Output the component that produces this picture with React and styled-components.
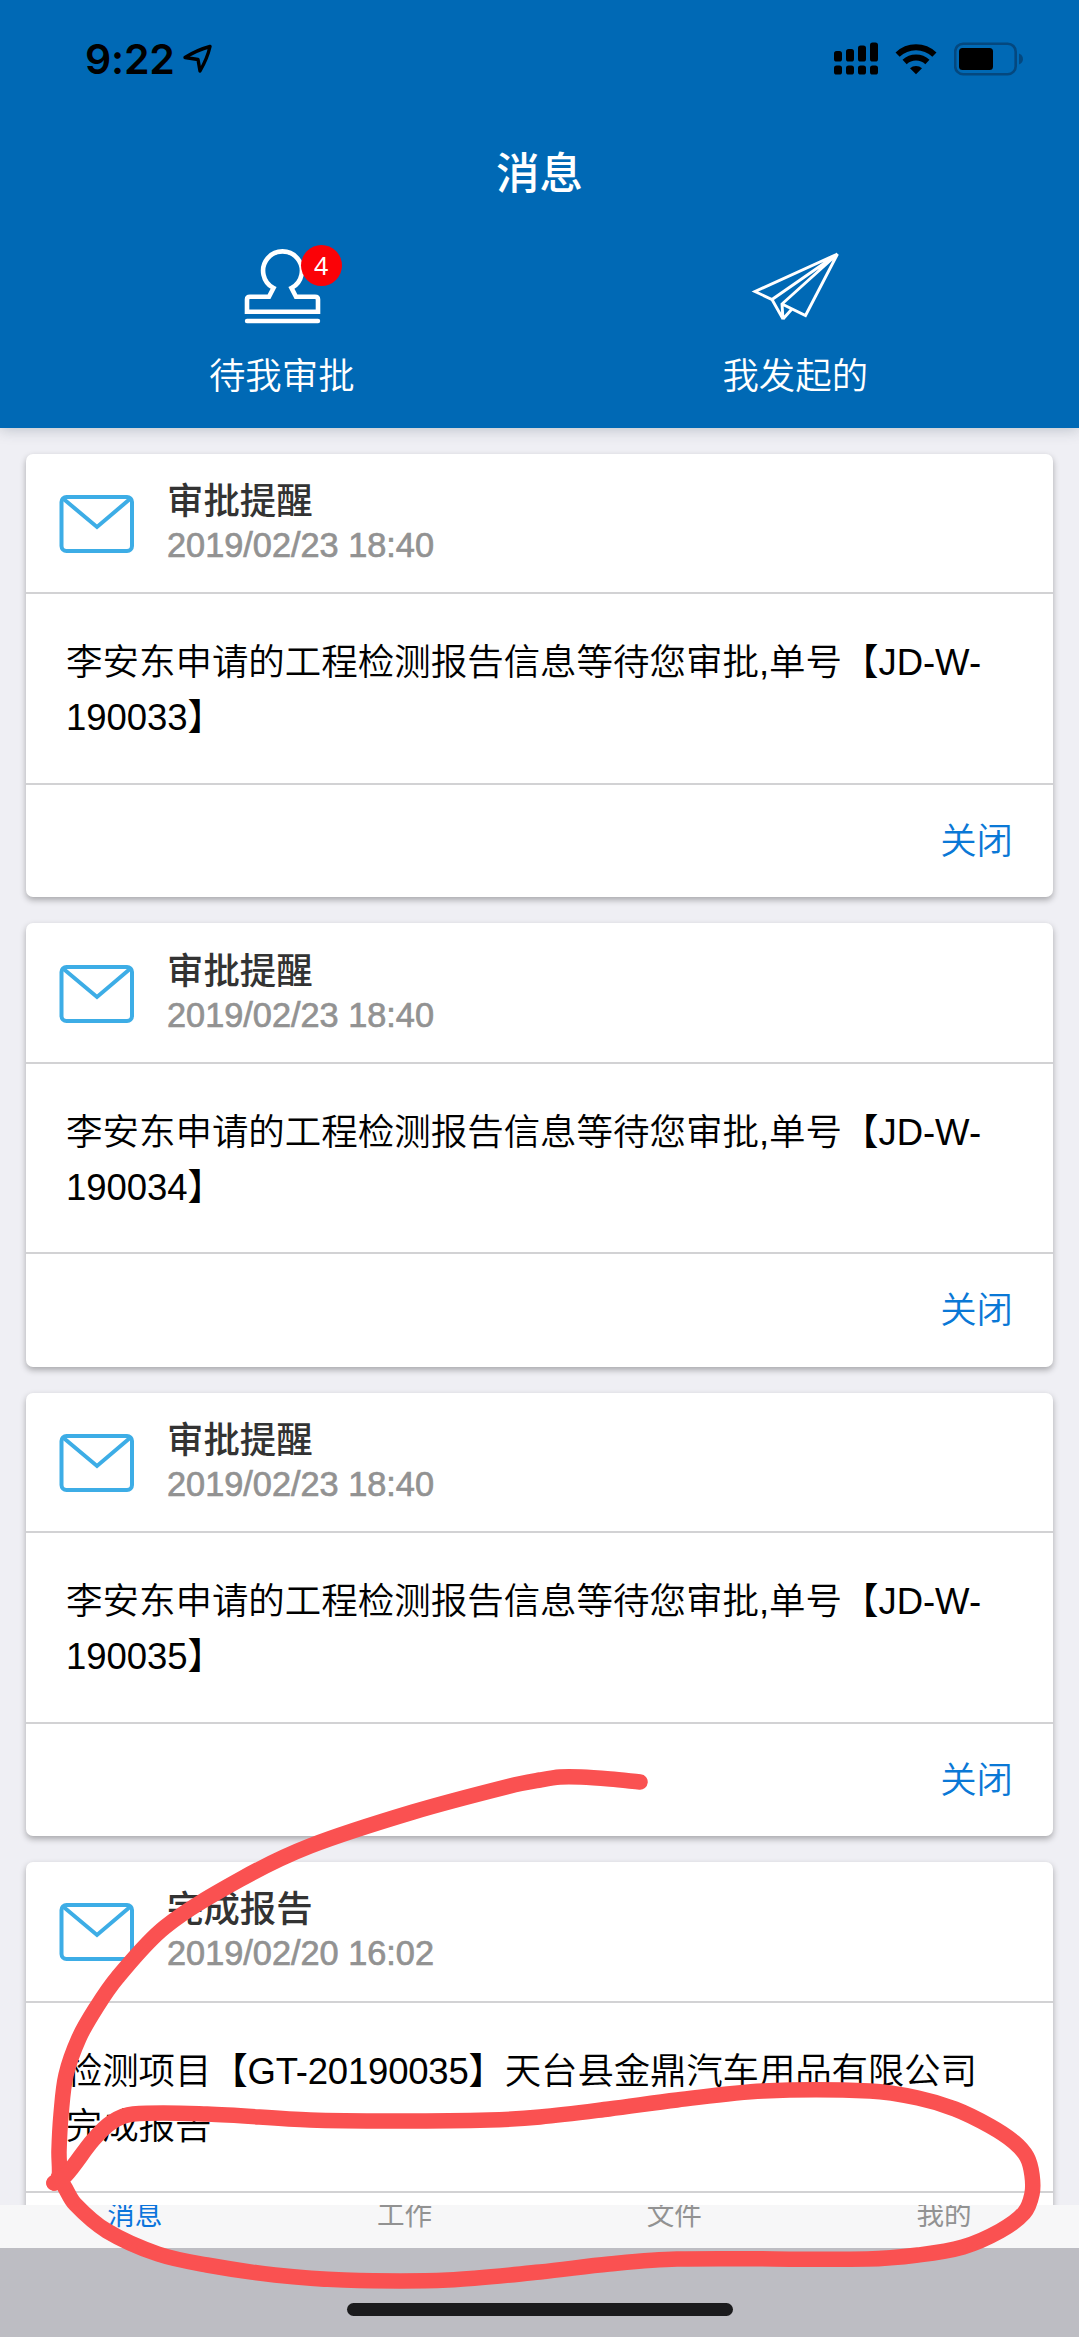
import React from "react";
import styled, { createGlobalStyle } from "styled-components";

const Global = createGlobalStyle`
  * { box-sizing: border-box; }
  body { margin: 0; background: #efeff4; }
`;

const sans = `"Liberation Sans", "Noto Sans CJK SC", sans-serif`;
const cjk = `"Noto Sans CJK SC", sans-serif`;

const Screen = styled.div`
  position: relative;
  display: flex;
  flex-direction: column;
  width: 1079px;
  height: 2337px;
  overflow: hidden;
  background: #efeff4;
  font-family: ${sans};
`;

const Header = styled.header`
  flex: none;
  display: flex;
  flex-direction: column;
  height: 428px;
  background: #0069b5;
  color: #fff;
  box-shadow: 0 1px 14px rgba(40, 60, 80, 0.28);
`;

const StatusBar = styled.div`
  display: flex;
  justify-content: space-between;
  align-items: center;
  height: 118px;
  padding: 0 56px 0 85px;
  color: #000;
`;

const StatusGroup = styled.div`
  display: flex;
  align-items: center;
  gap: ${(p) => p.$gap}px;
`;

const Clock = styled.span`
  font: 600 41px/48px Inter, sans-serif;
  letter-spacing: -0.2px;
`;

const Title = styled.h1`
  margin: 0;
  height: 108px;
  font: 500 43.5px/105px ${cjk};
  text-align: center;
`;

const Actions = styled.nav`
  display: grid;
  grid-template-columns: 1fr 1fr;
  padding: 18px 27px 0 25px;
`;

const Action = styled.a`
  display: flex;
  flex-direction: column;
  align-items: center;
  gap: 18px;
  font: 350 36.4px/54px ${cjk};
  color: #fff;
`;

const ActionIcon = styled.span`
  position: relative;
  display: flex;
  width: 88px;
  height: 84px;
`;

const Badge = styled.span`
  position: absolute;
  top: 1px;
  left: 63px;
  width: 41px;
  height: 41px;
  border-radius: 50%;
  background: #fb0207;
  font: 400 25px/41px "Noto Sans", sans-serif;
  text-align: center;
`;

const Feed = styled.main`
  flex: 1;
  min-height: 0;
  overflow: hidden;
  display: flex;
  flex-direction: column;
  gap: 26px;
  padding: 26px 26px 0;
`;

const Card = styled.article`
  flex: none;
  height: 443.4px;
  display: flex;
  flex-direction: column;
  border-radius: 7px;
  background: #fff;
  box-shadow: 0 3px 6px rgba(0, 0, 0, 0.3);
`;

const CardHead = styled.div`
  display: flex;
  gap: 32px;
  height: 140.4px;
  padding: 0 33px;
  align-items: center;
  border-bottom: 2px solid #d2d2d4;
`;

const Heading = styled.div`
  display: flex;
  flex-direction: column;
`;

const CardTitle = styled.h2`
  margin: 0;
  font: 500 36.4px/44px ${cjk};
  color: #333;
`;

const CardDate = styled.time`
  font: 400 34.3px/50px ${sans};
  color: #929292;
  -webkit-text-stroke: 0.7px #929292;
`;

const CardBody = styled.p`
  margin: 0;
  height: 190.4px;
  padding: 41px 40px 37px;
  font: 350 36.5px/55px ${sans};
  letter-spacing: ${(p) => (p.$tight ? "-0.2px" : "-0.03px")};
  color: #000;
  border-bottom: 2px solid #d2d2d4;
`;

const CardFoot = styled.div`
  flex: 1;
  display: flex;
  align-items: center;
  justify-content: flex-end;
  padding: 0 40px 6px;
`;

const CloseLink = styled.a`
  font: 350 36.4px/54px ${cjk};
  color: #0a78d6;
`;

const TabBar = styled.nav`
  flex: none;
  display: grid;
  grid-template-columns: repeat(4, 1fr);
  height: 43px;
  overflow: hidden;
  background: #f7f7f8;
`;

const Tab = styled.a`
  margin-top: -12px;
  height: 40px;
  font: 400 27.6px/40px ${cjk};
  text-align: center;
  color: ${(p) => (p.$active ? "#0a74dc" : "#929292")};
`;

const HomeArea = styled.footer`
  flex: none;
  display: flex;
  justify-content: center;
  height: 89px;
  padding-top: 55px;
  background: #bdbdc3;
`;

const HomeIndicator = styled.span`
  width: 386px;
  height: 13px;
  border-radius: 7px;
  background: #1b1b1d;
`;

const Ink = styled.svg`
  position: absolute;
  inset: 0;
  pointer-events: none;
`;

const messages = [
  { title: "审批提醒", date: "2019/02/23 18:40", text: "李安东申请的工程检测报告信息等待您审批,单号【JD-W-190033】" },
  { title: "审批提醒", date: "2019/02/23 18:40", text: "李安东申请的工程检测报告信息等待您审批,单号【JD-W-190034】" },
  { title: "审批提醒", date: "2019/02/23 18:40", text: "李安东申请的工程检测报告信息等待您审批,单号【JD-W-190035】" },
  { title: "完成报告", date: "2019/02/20 16:02", text: "检测项目【GT-20190035】天台县金鼎汽车用品有限公司完成报告", tight: true },
];

const arc = [
  [640, 1782], [610, 1779], [581, 1777], [560, 1777], [540, 1780], [510, 1786], [413, 1812],
  [310, 1846], [241, 1879], [165, 1927], [117, 1978], [96, 2008], [79, 2038], [66, 2075],
  [61, 2115], [59, 2151], [59, 2180], [54, 2183],
];

const loop = [
  [54, 2183], [66, 2175], [93, 2140], [112, 2122], [133, 2114], [207, 2114], [310, 2120], [400, 2121],
  [489, 2120], [540, 2117], [609, 2109], [677, 2100], [763, 2091], [870, 2091],
  [918, 2098], [955, 2109], [990, 2126], [1014, 2142], [1027, 2157], [1032, 2175], [1032, 2194],
  [1024, 2213], [1000, 2231], [963, 2247], [918, 2255], [867, 2259], [677, 2259], [609, 2264],
  [540, 2272], [448, 2280], [344, 2280], [275, 2275], [207, 2265], [158, 2254],
  [107, 2231], [75, 2204], [64, 2186], [58, 2178],
];

// Catmull-Rom spline through the pen positions
function smooth(pts) {
  let d = `M${pts[0]}`;
  for (let i = 0; i < pts.length - 1; i++) {
    const p0 = pts[i - 1] || pts[i];
    const p1 = pts[i];
    const p2 = pts[i + 1];
    const p3 = pts[i + 2] || p2;
    const len = Math.hypot(p2[0] - p1[0], p2[1] - p1[1]);
    const ctrl = (a, b, c, s) => {
      const l = Math.hypot(b[0] - a[0], b[1] - a[1]) || 1;
      return [c[0] + (s * (b[0] - a[0]) * len) / l / 3, c[1] + (s * (b[1] - a[1]) * len) / l / 3];
    };
    d += `C${ctrl(p0, p2, p1, 1)} ${ctrl(p1, p3, p2, -1)} ${p2}`;
  }
  return d;
}

const LocationIcon = () => (
  <svg width="30" height="30" viewBox="0 0 30 30" fill="none" stroke="#000" strokeWidth="3.4" strokeLinejoin="round">
    <path d="M2 13.500Q14 6 27 2.500 24.500 14 17 27L15 15.500Z" />
  </svg>
);

const SignalIcon = () => (
  <svg width="44" height="34" viewBox="0 0 44 34">
    {[9, 7, 3.5, 0.5].map((y, i) => (
      <g key={y}>
        <rect x={i * 12} y={y} width="8" height={19.5 - y} rx="2.6" />
        <rect x={i * 12} y="23.5" width="8" height="9" rx="2.6" />
      </g>
    ))}
  </svg>
);

const WifiIcon = () => (
  <svg width="42" height="32" viewBox="0 0 42 32">
    <g fill="none" stroke="#000" strokeWidth="6">
      <path d="M2.6 11.6a26.5 26.5 0 0 1 36.8 0" />
      <path d="M9.6 19a16.5 16.5 0 0 1 22.8 0" />
    </g>
    <path d="M21 31.2 15 25.3a8.7 8.7 0 0 1 12 0Z" />
  </svg>
);

const BatteryIcon = () => (
  <svg width="69" height="34" viewBox="0 0 69 34">
    <rect x="1.2" y="1.7" width="60.5" height="30.5" rx="8" fill="none" stroke="#04487f" strokeWidth="2.6" />
    <rect x="5" y="6" width="34" height="22" rx="3.5" />
    <path d="M65 11.5c5.3 1.8 5.3 9.2 0 11Z" fill="#04487f" />
  </svg>
);

const StampIcon = () => (
  <svg width="88" height="84" viewBox="0 0 88 84" fill="none" stroke="#fff" strokeWidth="4.6">
    <path d="M9 67.700V55.500q0-2.800 3-2.800H31L35.500 44A19.400 19.400 0 1 1 53.500 44L58 52.700H77q3 0 3 2.800V67.700Z" />
    <path d="M9 77H80" strokeLinecap="round" strokeWidth="4.400" />
  </svg>
);

const PlaneIcon = () => (
  <svg width="88" height="84" viewBox="0 0 88 84" fill="none" stroke="#fff" strokeWidth="2.9">
    <path d="M86.500 10 4 47.500 21 55.500Z M21 55.500 32 75 31 60 86.500 10 54.500 71.500 31 60 M32 75 40.500 65.500" />
  </svg>
);

const MailIcon = () => (
  <svg width="76" height="62" viewBox="0 0 76 62" fill="none" stroke="#3dade6" strokeWidth="4">
    <rect x="2.500" y="5" width="70.500" height="54" rx="5" />
    <path d="M4 6.500 38 35 71.500 6.500" />
  </svg>
);

export default function App() {
  return (
    <Screen>
      <Global />
      <Header>
        <StatusBar>
          <StatusGroup $gap={8}>
            <Clock>9:22</Clock>
            <LocationIcon />
          </StatusGroup>
          <StatusGroup $gap={17}>
            <SignalIcon />
            <WifiIcon />
            <BatteryIcon />
          </StatusGroup>
        </StatusBar>
        <Title>消息</Title>
        <Actions>
          <Action>
            <ActionIcon>
              <StampIcon />
              <Badge>4</Badge>
            </ActionIcon>
            待我审批
          </Action>
          <Action>
            <ActionIcon>
              <PlaneIcon />
            </ActionIcon>
            我发起的
          </Action>
        </Actions>
      </Header>
      <Feed>
        {messages.map(({ title, date, text, tight }) => (
          <Card key={text}>
            <CardHead>
              <MailIcon />
              <Heading>
                <CardTitle>{title}</CardTitle>
                <CardDate>{date}</CardDate>
              </Heading>
            </CardHead>
            <CardBody $tight={tight}>{text}</CardBody>
            <CardFoot>
              <CloseLink>关闭</CloseLink>
            </CardFoot>
          </Card>
        ))}
      </Feed>
      <TabBar>
        <Tab $active>消息</Tab>
        <Tab>工作</Tab>
        <Tab>文件</Tab>
        <Tab>我的</Tab>
      </TabBar>
      <HomeArea>
        <HomeIndicator />
      </HomeArea>
      <Ink width="1079" height="2337" fill="none" stroke="#fa5151" strokeWidth="15.5" strokeLinecap="round" strokeLinejoin="round">
        <path d={smooth(arc)} />
        <path d={smooth(loop)} />
      </Ink>
    </Screen>
  );
}
